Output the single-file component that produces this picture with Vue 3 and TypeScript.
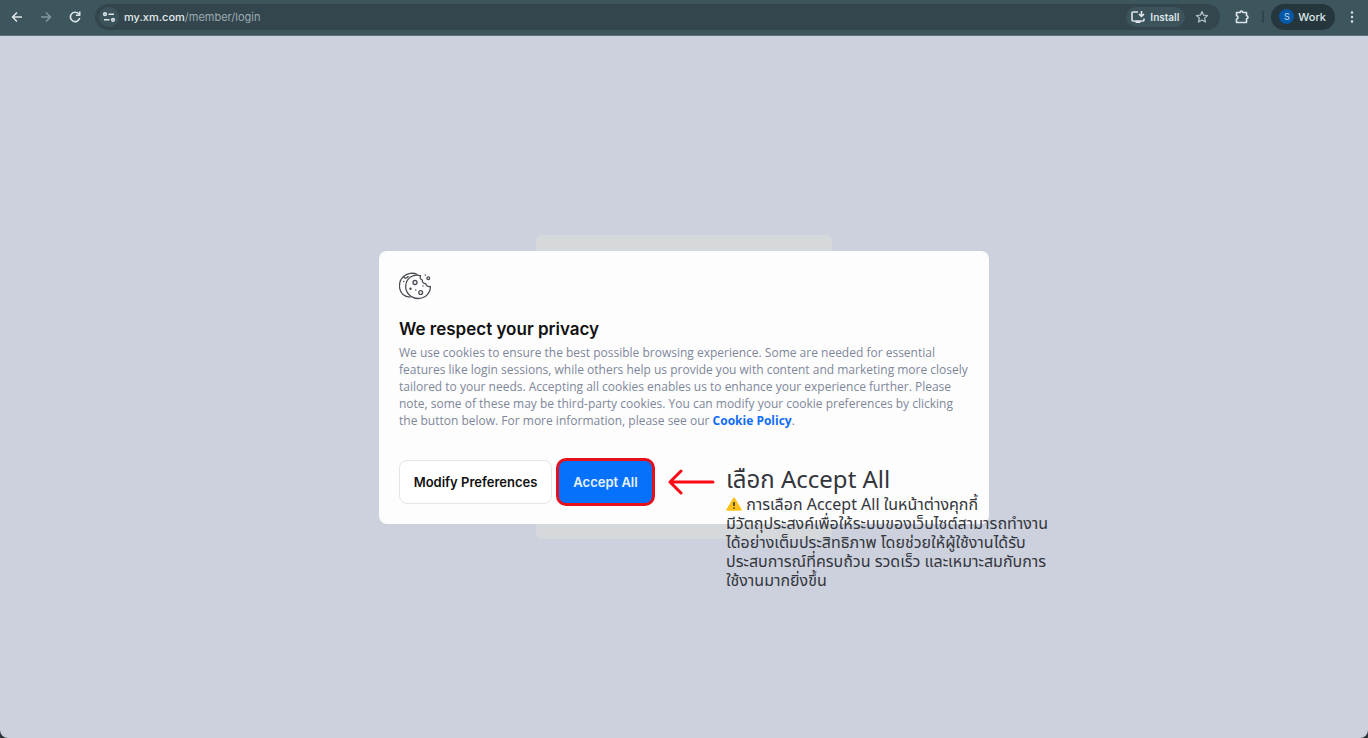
<script setup lang="ts">
import { ref } from 'vue'

const url = ref('my.xm.com/member/login')

const policyLines: string[] = [
  'We use cookies to ensure the best possible browsing experience. Some are needed for essential',
  'features like login sessions, while others help us provide you with content and marketing more closely',
  'tailored to your needs. Accepting all cookies enables us to enhance your experience further. Please',
  'note, some of these may be third-party cookies. You can modify your cookie preferences by clicking',
]

const noteLines: string[] = [
  'มีวัตถุประสงค์เพื่อให้ระบบของเว็บไซต์สามารถทำงาน',
  'ได้อย่างเต็มประสิทธิภาพ โดยช่วยให้ผู้ใช้งานได้รับ',
  'ประสบการณ์ที่ครบถ้วน รวดเร็ว และเหมาะสมกับการ',
  'ใช้งานมากยิ่งขึ้น',
]
</script>

<template>
  <div class="browser">
    <header class="toolbar">
      <nav class="nav">
        <button class="tool" aria-label="Back">
          <svg viewBox="0 0 16 16" width="16" height="16"><path d="M13 8H3.500M8 3.500 3.500 8 8 12.500" /></svg>
        </button>
        <button class="tool dim" aria-label="Forward">
          <svg viewBox="0 0 16 16" width="16" height="16"><path d="M3 8h9.500M8 3.500 12.500 8 8 12.500" /></svg>
        </button>
        <button class="tool" aria-label="Reload">
          <svg viewBox="0 0 16 16" width="16" height="16"><path d="M11.800 5A4.700 4.700 0 1 0 12.700 9M12.700 2.500V6.300H8.900" /></svg>
        </button>
      </nav>
      <div class="address">
        <button class="site" aria-label="Site information">
          <svg viewBox="0 0 16 16" width="16" height="16">
            <circle cx="4" cy="5.200" r="1.300" /><path d="M7.500 5.200H13M3 10.800h5.500" /><circle cx="12" cy="10.800" r="1.300" />
          </svg>
        </button>
        <div class="url" role="textbox" aria-label="Address" aria-readonly="true">
          <b>{{ url.split('/')[0] }}</b>{{ url.slice(url.indexOf('/')) }}
        </div>
        <button class="install">
          <svg viewBox="0 0 16 16" width="16" height="16">
            <path d="M8 3H3Q2 3 2 4v7q0 1 1 1h10q1 0 1-1V9.500M11.500 2v5M9 5l2.500 2.500L14 5" /><path class="fill" d="M5.500 12h5v2h-5z" />
          </svg>
          Install
        </button>
        <button class="tool star" aria-label="Bookmark">
          <svg viewBox="0 0 16 16" width="16" height="16"><path d="m8 2.500 1.600 3.700 4 .3-3 2.600.9 3.900L8 10.900 4.500 13l.9-3.900-3-2.600 4-.3z" /></svg>
        </button>
      </div>
      <button class="tool puzzle" aria-label="Extensions">
        <svg viewBox="0 0 16 16" width="16" height="16"><path d="M2.500 3.500h3.600c0-1.800 2.800-1.800 2.800 0h3.600v3.300c2 0 2 3 0 3v3.700h-10V10c2 0 2-3.200 0-3.200z" /></svg>
      </button>
      <span class="divider"></span>
      <button class="profile"><span class="avatar">S</span>Work</button>
      <button class="tool menu" aria-label="Menu">
        <svg viewBox="0 0 16 16" width="16" height="16"><g class="fill"><circle cx="8" cy="3.500" r="1.200" /><circle cx="8" cy="8" r="1.200" /><circle cx="8" cy="12.500" r="1.200" /></g></svg>
      </button>
    </header>

    <main class="page">
      <div class="backdrop"></div>
      <section class="dialog" role="dialog" aria-labelledby="privacy-title">
        <svg class="cookie" viewBox="0 0 34 28" width="34" height="28">
          <path d="M18.500 2.500C14 .3 8 1 4 5-1 10-.5 18 4 22.500c2 1.900 4.500 2.700 7.500 2.600" />
          <path d="M21.500 3.700C14.500 1.500 7.700 5.500 6.800 13c-.8 7.500 5 13.500 12.300 13.500S31.800 21 31.300 14.300c-2 .8-4.100-.3-4.600-2.600-2.300.1-3.700-1.600-3.300-3.700-1.700-.6-2.600-2.300-1.900-4.300z" />
          <path d="M4.500 5c1.500 1.500 3.500 1.500 5-.8" />
          <circle cx="16" cy="10.500" r="2" /><circle cx="21.700" cy="20.500" r="1.900" /><circle cx="29.300" cy="6.300" r="1.400" />
          <g class="dots"><circle cx="11.500" cy="16.800" r="1.200" /><circle cx="24" cy="14" r=".7" /><circle cx="16.800" cy="18" r=".7" /><circle cx="26.300" cy="3" r=".8" /><circle cx="4.800" cy="9.500" r=".8" /></g>
        </svg>
        <h1 id="privacy-title">We respect your privacy</h1>
        <p class="policy">
          <span v-for="line in policyLines" :key="line">{{ line }}</span>
          <span>the button below. For more information, please see our <a href="#">Cookie Policy</a>.</span>
        </p>
        <div class="actions">
          <button class="modify">Modify Preferences</button>
          <button class="accept">Accept All</button>
        </div>
        <aside class="callout">
          <svg class="arrow" viewBox="0 0 48 26" width="48" height="26"><path d="M46 13H3M14 2 3 13l11 11" /></svg>
          <div class="note">
            <h2>เลือก Accept All</h2>
            <p>
              <span>
                <svg class="warn" viewBox="0 0 16 14" width="16" height="14">
                  <path class="tri" d="M8 1.500 14.700 12.700H1.300z" /><path class="bang" d="M8 5v4M8 10.500v1.200" />
                </svg>
                การเลือก Accept All ในหน้าต่างคุกกี้
              </span>
              <span v-for="line in noteLines" :key="line">{{ line }}</span>
            </p>
          </div>
        </aside>
      </section>
    </main>
  </div>
</template>

<style>
body {
  margin: 0;
  background: #2e3539;
}
</style>

<style scoped>
.browser {
  min-height: 100vh;
  display: flex;
  flex-direction: column;
  font-family: Inter, "Open Sans", sans-serif;
}
button {
  font: inherit;
  border: 0;
  margin: 0;
  cursor: pointer;
}
svg {
  fill: none;
  stroke: currentColor;
  stroke-linejoin: round;
  flex: none;
}
.fill {
  fill: currentColor;
  stroke: none;
}
.toolbar {
  box-sizing: border-box;
  height: 36px;
  padding: 0 8px 2px 9px;
  display: flex;
  align-items: center;
  background: #3d565e;
  border-bottom: 1px solid #58717a;
  color: #dce5e8;
  font-size: 11px;
}
.toolbar svg {
  stroke-width: 1.6;
  display: block;
}
.nav {
  display: flex;
  gap: 13px;
  margin-right: 12px;
}
.tool {
  padding: 0;
  background: none;
  color: #dce5e8;
}
.dim {
  color: #82969d;
}
.address {
  flex: 1;
  height: 26px;
  padding: 0 10px 0 4px;
  border-radius: 13px;
  background: #34464d;
  display: flex;
  align-items: center;
}
.site {
  padding: 2px;
  border-radius: 50%;
  background: #3d535b;
  color: #dce5e8;
}
.url {
  flex: 1;
  margin-left: 5px;
  color: #9babb1;
}
.url b {
  font-weight: 500;
  color: #e2eaed;
}
.install {
  height: 20px;
  padding: 0 6px 0 4px;
  border-radius: 10px;
  background: #3d535b;
  color: #dce5e8;
  display: flex;
  align-items: center;
  gap: 4px;
  font-size: 10px;
  font-weight: 600;
}
.star {
  margin-left: 9px;
  color: #b5c3c8;
}
.star svg {
  stroke-width: 1.2;
}
.puzzle {
  margin-left: 14px;
}
.divider {
  width: 2px;
  height: 12px;
  margin: 0 7px 0 12px;
  background: #2e454d;
}
.profile {
  height: 26px;
  padding: 0 9px 0 8px;
  border-radius: 13px;
  background: #26363d;
  color: #dce5e8;
  display: flex;
  align-items: center;
  gap: 4px;
  font-weight: 500;
}
.avatar {
  width: 15px;
  line-height: 15px;
  border-radius: 50%;
  background: #0758a8;
  color: #a8cbec;
  font-size: 9px;
  text-align: center;
}
.menu {
  margin-left: 9px;
}
.page {
  flex: 1;
  display: grid;
  place-items: center;
  background: #cdd1dd;
  border-radius: 0 0 8px 8px;
}
.backdrop,
.dialog {
  grid-area: 1 / 1;
}
.backdrop {
  width: 296px;
  height: 304px;
  border-radius: 6px;
  background: #d6d9dc;
}
.dialog {
  position: relative;
  box-sizing: border-box;
  width: 610px;
  padding: 21px 20px 18px;
  border-radius: 8px;
  background: #fdfdfe;
  display: flex;
  flex-direction: column;
}
.cookie {
  color: #4a4d54;
  stroke-width: 1.3;
}
.dots {
  fill: currentColor;
  stroke: none;
}
h1 {
  margin: 17px 0 3px;
  font-size: 17px;
  line-height: 24px;
  font-weight: 600;
  color: #111;
}
.policy {
  margin: 0;
  font-family: "Open Sans", sans-serif;
  font-size: 12px;
  line-height: 17px;
  color: #7e8799;
  white-space: nowrap;
}
.policy span,
.note span {
  display: block;
}
.policy a {
  color: #116df5;
  font-weight: 700;
  text-decoration: none;
}
.actions {
  margin-top: 29px;
  display: flex;
  align-items: center;
  gap: 4px;
  font-size: 13px;
}
.actions button {
  font-weight: 600;
  box-sizing: border-box;
  padding: 0;
}
.modify {
  width: 153px;
  height: 44px;
  border: 1px solid #e3e5ea;
  border-radius: 8px;
  background: #fff;
  color: #111;
}
.accept {
  width: 99px;
  height: 48px;
  border: 3px solid #e60f1c;
  border-radius: 10px;
  background: #0672fb;
  color: #e9f2ff;
}
.callout {
  position: absolute;
  left: 288px;
  top: 216px;
  display: flex;
  gap: 11px;
  white-space: nowrap;
  font-family: "Noto Sans Thai", "Noto Sans", Lato, sans-serif;
  color: #33363c;
}
.arrow {
  margin-top: 2px;
  color: #fa0a14;
  stroke-width: 3;
  stroke-linecap: round;
}
h2 {
  margin: 0;
  font-size: 24px;
  line-height: 29px;
  font-weight: 400;
}
.note p {
  margin: 0;
  font-size: 16px;
  line-height: 19px;
}
.warn {
  vertical-align: -1px;
}
.tri {
  fill: #fcc21b;
  stroke: #fcc21b;
  stroke-width: 2;
}
.bang {
  stroke: #3a352a;
  stroke-width: 1.6;
}
</style>
